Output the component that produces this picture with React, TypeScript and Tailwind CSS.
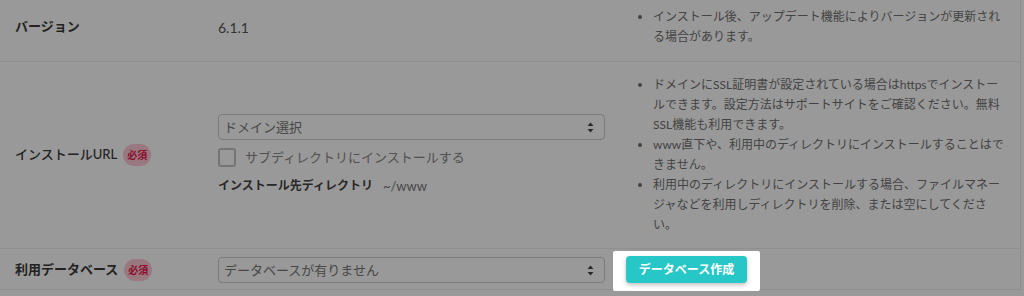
import React from "react";

function Badge() {
  return (
    <span className="ml-[6px] inline-flex h-[22px] w-[28px] items-center justify-center rounded-full bg-[#ffc9d6] text-[10px] font-bold leading-none text-[#e8174a]">
      必須
    </span>
  );
}

function SelectBox({ label }: { label: string }) {
  return (
    <div className="flex h-[26px] w-[387px] items-center justify-between rounded-[4px] border border-[#cfcfcf] bg-white pl-[5px] pr-[10px]">
      <span className="text-[13px] leading-none text-[#777]">{label}</span>
      <svg width="7" height="11" viewBox="0 0 7 11" className="text-[#444]">
        <path d="M3.5 0.5 L6.5 4 L0.5 4 Z" fill="currentColor" />
        <path d="M0.5 7 L6.5 7 L3.5 10.5 Z" fill="currentColor" />
      </svg>
    </div>
  );
}

export default function App() {
  return (
    <div className="h-[296px] w-[1024px] overflow-hidden bg-white font-['Lato','Noto_Sans_CJK_JP',sans-serif]">
      <div className="w-[1021px] border-r border-[#ebebeb]">
        {/* Row 1 */}
        <div className="grid grid-cols-[203px_417px_400px] border-b border-[#eee]">
          <div className="flex items-center pb-[7px] pl-[15px] text-[13px] font-bold text-[#3a3a3a]">
            バージョン
          </div>
          <div className="flex items-center pb-[7px] pl-[15px] text-[14px] text-[#555]">6.1.1</div>
          <div className="pb-[14px] pl-[15px] pr-[15px] pt-[7px]">
            <ul className="list-disc pl-[18px] text-[12px] leading-[20px] text-[#707070]">
              <li>インストール後、アップデート機能によりバージョンが更新される場合があります。</li>
            </ul>
          </div>
        </div>

        {/* Row 2 */}
        <div className="grid grid-cols-[203px_417px_400px] border-b border-[#eee]">
          <div className="flex items-center pl-[15px] text-[13px] font-medium text-[#3a3a3a]">
            インストールURL
            <Badge />
          </div>
          <div className="flex flex-col pl-[15px] pt-[52px]">
            <SelectBox label="ドメイン選択" />
            <div className="mt-[8px] flex h-[19px] items-center">
              <span className="h-[19px] w-[18px] rounded-[3px] border-2 border-[#c4c4c4] bg-white" />
              <span className="ml-[9px] text-[13px] text-[#888]">サブディレクトリにインストールする</span>
            </div>
            <div className="mt-[10px] flex items-center leading-[18px]">
              <span className="text-[12px] font-bold text-[#444]">インストール先ディレクトリ</span>
              <span className="ml-[10px] text-[13px] text-[#777]">~/www</span>
            </div>
          </div>
          <div className="pb-[13px] pl-[15px] pr-[15px] pt-[13px]">
            <ul className="list-disc pl-[18px] text-[12px] leading-[20px] text-[#707070]">
              <li>
                ドメインにSSL証明書が設定されている場合はhttpsでインストールできます。設定方法はサポートサイトをご確認ください。無料SSL機能も利用できます。
              </li>
              <li>www直下や、利用中のディレクトリにインストールすることはできません。</li>
              <li>
                利用中のディレクトリにインストールする場合、ファイルマネージャなどを利用しディレクトリを削除、または空にしてくださ
                <br />
                い。
              </li>
            </ul>
          </div>
        </div>

        {/* Row 3 */}
        <div className="grid h-[41px] grid-cols-[203px_417px_400px] border-b border-[#eee]">
          <div className="flex items-center pl-[15px] text-[13px] font-bold text-[#3a3a3a]">
            利用データベース
            <Badge />
          </div>
          <div className="flex items-center pl-[15px]">
            <SelectBox label="データベースが有りません" />
          </div>
          <div className="flex items-start">
            <div className="relative z-10 ml-[-7px] mt-[2px] rounded-[2px] bg-white px-[13px] pb-[8px] pt-[5px] shadow-[0_0_0_9999px_rgba(0,0,0,0.4)]">
              <button className="flex h-[27px] w-[121px] items-center justify-center rounded-[4px] bg-[#27c7c7] text-[12px] font-bold text-white shadow-[0_2px_4px_rgba(0,0,0,0.25)]">
                データベース作成
              </button>
            </div>
          </div>
        </div>
      </div>
    </div>
  );
}
